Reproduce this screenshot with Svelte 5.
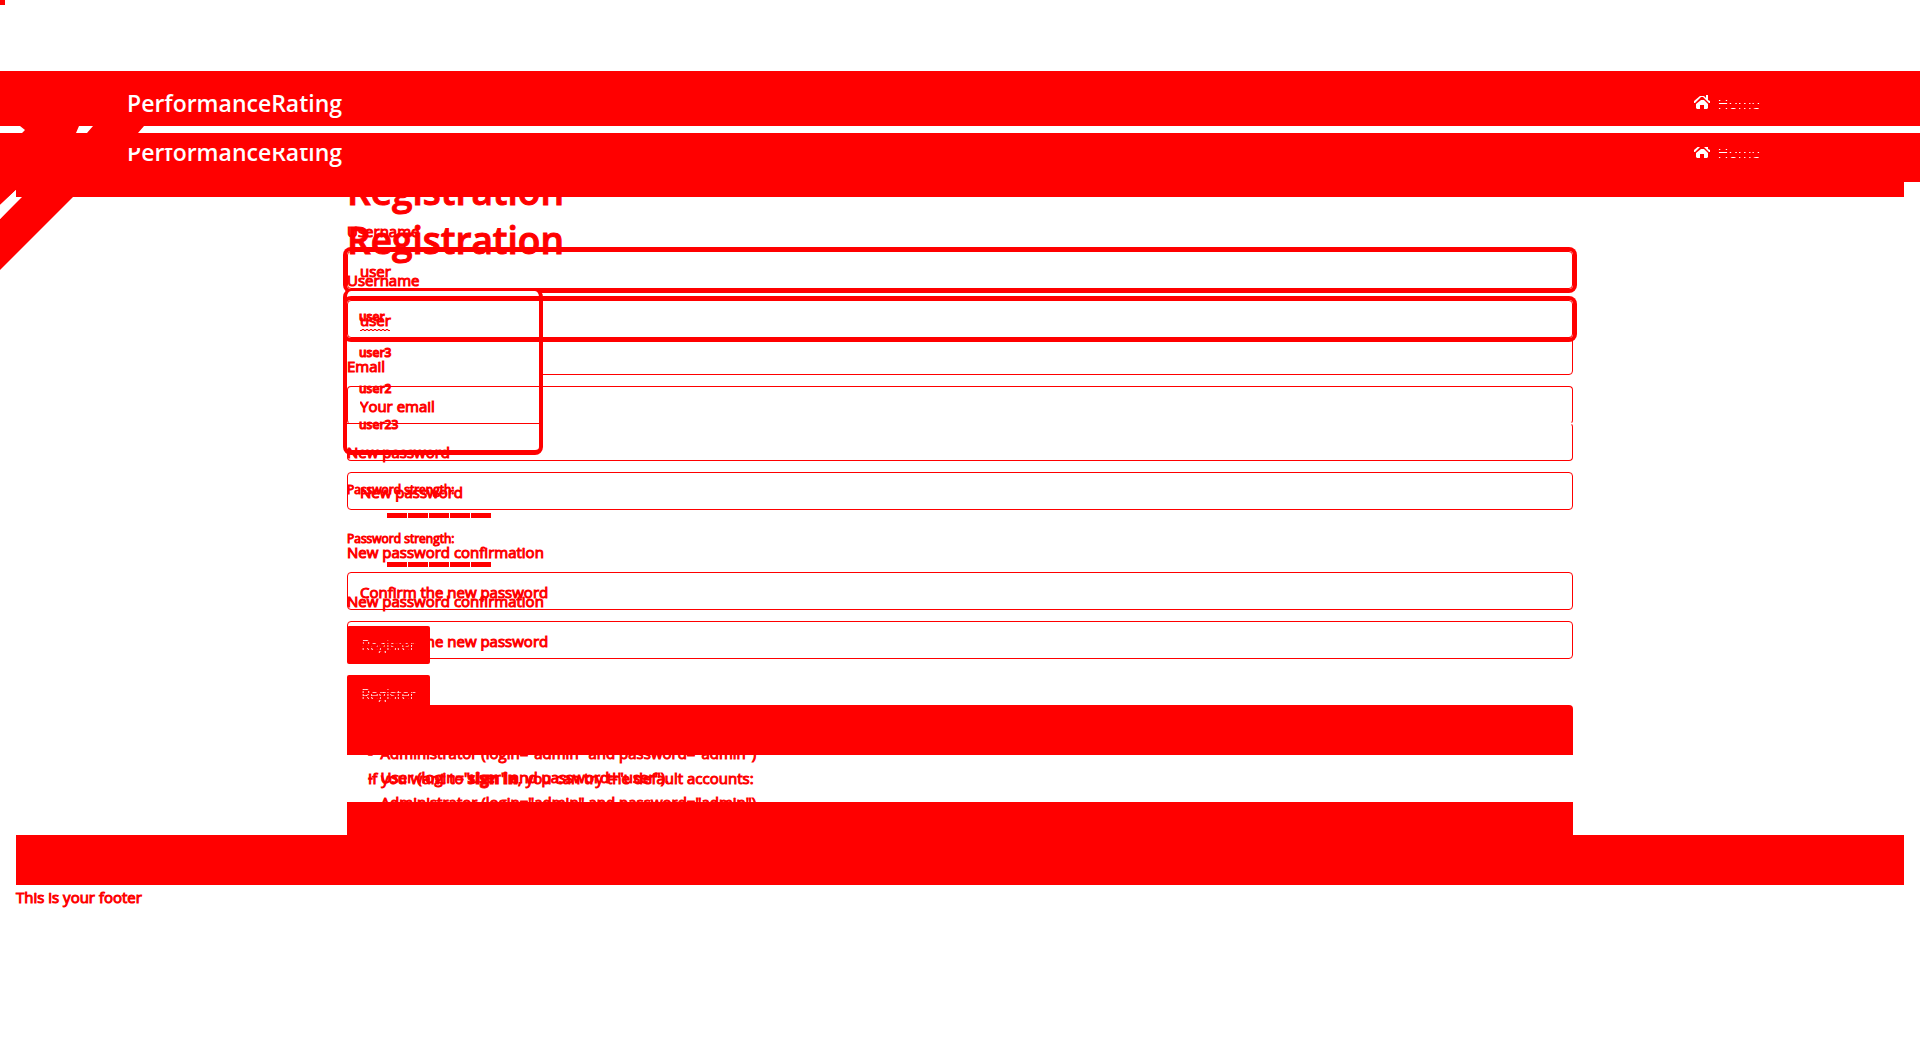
<script>
  const layers = ['first', 'second'];
  const names = ['user', 'user3', 'user2', 'user23'];
</script>

{#snippet home()}
  <a class="home" href="#home">
    <svg viewBox="0 0 16 14" width="16" height="14" aria-hidden="true">
      <path d="M7 5H10L14 9V13L13 14H10V10H6V14H3L2 13V9Z" fill="#fff" />
      <path d="M0 6 6 1H10L12 3V0H14V5L16 6V8H15L9 2H7L1 8H0Z" fill="#fff" />
    </svg>
    <span class="rows">Home</span>
  </a>
{/snippet}

<div class="page">
  <div class="dot"></div>
  <header>
    <nav class="bar upper"><a class="brand" href="#top">PerformanceRating</a>{@render home()}</nav>
    <nav class="bar lower"><a class="brand" href="#top">PerformanceRating</a>{@render home()}</nav>
    <div class="edge"></div>
    <svg class="ribbon" viewBox="0 0 150 200" width="150" height="200" aria-hidden="true">
      <path fill="#f00" d="M20 55H79L76 62H22L25 59ZM93 55H144L138 62H87ZM0 111H16V119L0 134ZM0 148 22 126H73L0 199Z" />
      <path fill="#fff" d="M16 119V129L21 126L0 148V134Z" />
    </svg>
  </header>

  <main>
    {#each layers as layer}
      <section class="layer {layer}">
        <form onsubmit={(e) => e.preventDefault()}>
          <h1>Registration</h1>
          <div class="field">
            <label for="{layer}-name">Username</label>
            <input id="{layer}-name" class="focus" value="user" autocomplete="off" spellcheck="false" />
            {#if layer === 'first'}
              <ul class="suggest">
                {#each names as name}<li>{name}</li>{/each}
              </ul>
            {:else}
              <svg class="wave" viewBox="0 0 30 2" width="30" height="2" aria-hidden="true">
                <path d="M0 1.5H2V.5H4V1.5H6V.5H8V1.5H10V.5H12V1.5H14V.5H16V1.5H18V.5H20V1.5H22V.5H24V1.5H26V.5H28V1.5H30" fill="none" stroke="#f00" />
              </svg>
            {/if}
          </div>
          <div class="field">
            <label for="{layer}-email">Email</label>
            <input id="{layer}-email" type="email" placeholder="Your email" />
          </div>
          <div class="field">
            <label for="{layer}-pass">New password</label>
            <input id="{layer}-pass" class="pass" type="password" placeholder="New password" />
          </div>
          <div class="strength">
            <small>Password strength:</small>
            <div class="points"><i></i><i></i><i></i><i></i><i></i></div>
          </div>
          <div class="field">
            <label for="{layer}-confirm">New password confirmation</label>
            <input id="{layer}-confirm" type="password" placeholder="Confirm the new password" />
          </div>
          <button type="submit"><span class="dots">Register</span></button>
          <div class="alert">
            <p>If you want to <a href="#login">sign in</a>, you can try the default accounts:</p>
            <p>-&nbsp; Administrator (login="admin" and password="admin")</p>
            <p>-&nbsp; User (login="user" and password="user").</p>
          </div>
        </form>
      </section>
    {/each}
  </main>
  <div class="base"></div>
  <footer>This is your footer</footer>
</div>

<style>
  :global(body) { margin: 0; background: #fff; }
  .page { color: #f00; font: 400 15px/24px "Open Sans", sans-serif; -webkit-text-stroke: 1px #f00; overflow: hidden; }
  .page * { box-sizing: border-box; }
  .dot { width: 5px; height: 5px; background: #f00; margin-bottom: 66px; }
  header { position: relative; -webkit-text-stroke: 0; }
  .bar { background: #f00; display: flex; justify-content: space-between; align-items: flex-start; padding: 0 160px 0 127px; }
  .upper { height: 55px; padding-top: 16px; }
  .lower { height: 49px; margin-top: 7px; padding-top: 3px; }
  .lower .brand { clip-path: inset(12px 0 0 0); }
  .lower .home { clip-path: inset(11px 0 0 0); }
  .brand { color: #fff; font-size: 23px; font-weight: 600; line-height: 33px; text-decoration: none; }
  .home { color: #fff; font-size: 15px; font-weight: 400; text-decoration: none; display: flex; align-items: center; gap: 8px; height: 32px; }
  .home svg { margin-bottom: 2px; }
  .rows { mask: linear-gradient(transparent 9px, #000 9px 10px, transparent 10px 12px, #000 12px 13px, transparent 13px 17px, #000 17px 18px, transparent 18px); }
  .dots { mask: repeating-linear-gradient(#000 0 2px, transparent 2px 3px); }
  .edge { height: 15px; margin: 0 16px; background: #f00; }
  .ribbon { position: absolute; left: 0; top: 0; }
  main { display: grid; margin-top: -60px; }
  .layer { grid-area: 1 / 1; display: flex; justify-content: center; padding: 0 347px; position: relative; z-index: 0; }
  .second { margin-top: 49px; margin-bottom: -49px; z-index: 1; }
  form { width: 100%; }
  h1 { font-size: 37px; line-height: 48px; font-weight: 600; margin: 30px 0 4px; }
  .field { display: flex; flex-direction: column; gap: 8px; margin-bottom: 16px; position: relative; }
  label { line-height: 24px; }
  input { height: 38px; width: 100%; border: 1px solid #f00; border-radius: 4px; padding: 2px 12px 0; background: transparent; color: #f00; font: inherit; -webkit-text-stroke: inherit; outline: none; }
  input::placeholder { color: #f00; opacity: 1; }
  .focus { box-shadow: 0 0 0 4px #f00; }
  .first .pass { border-top-color: transparent; }
  .second input[type="email"] { border-bottom-color: transparent; }
  .suggest { position: absolute; z-index: 1; left: -4px; top: 70px; width: 200px; margin: 0; padding: 8px 12px 7px; list-style: none; background: #fff; border: 4px solid #f00; border-top-width: 2px; border-bottom-width: 5px; border-radius: 8px; font-size: 12px; font-weight: 600; line-height: 36px; }
  .suggest::after { content: ""; position: absolute; left: 0; right: 0; top: 132px; height: 1px; background: #f00; }
  .wave { position: absolute; left: 13px; top: 61px; }
  .strength { margin-top: -16px; height: 79px; padding-top: 21px; }
  small { display: block; font-size: 12px; line-height: 16px; }
  .points { display: flex; gap: 1px; margin: 15px 0 0 40px; }
  .points i { width: 20px; height: 5px; background: #f00; }
  button { height: 38px; width: 83px; padding: 0; border: 0; border-radius: 2px; background: #f00; color: #fff; font: 300 15px/24px "Open Sans", sans-serif; -webkit-text-stroke: 0; display: flex; justify-content: center; align-items: center; }
  .alert { margin-top: 41px; padding: 12px 21px 13px; border-radius: 4px; }
  .first .alert { background: linear-gradient(#f00 50px, transparent 50px); }
  .second .alert { background: linear-gradient(transparent 48px, #f00 48px); }
  .alert p { margin: 0; }
  .alert a { color: #f00; font-weight: 800; text-decoration: none; }
  .base { height: 50px; margin: 33px 16px 0; background: #f00; }
  footer { padding: 0 16px; }
</style>
